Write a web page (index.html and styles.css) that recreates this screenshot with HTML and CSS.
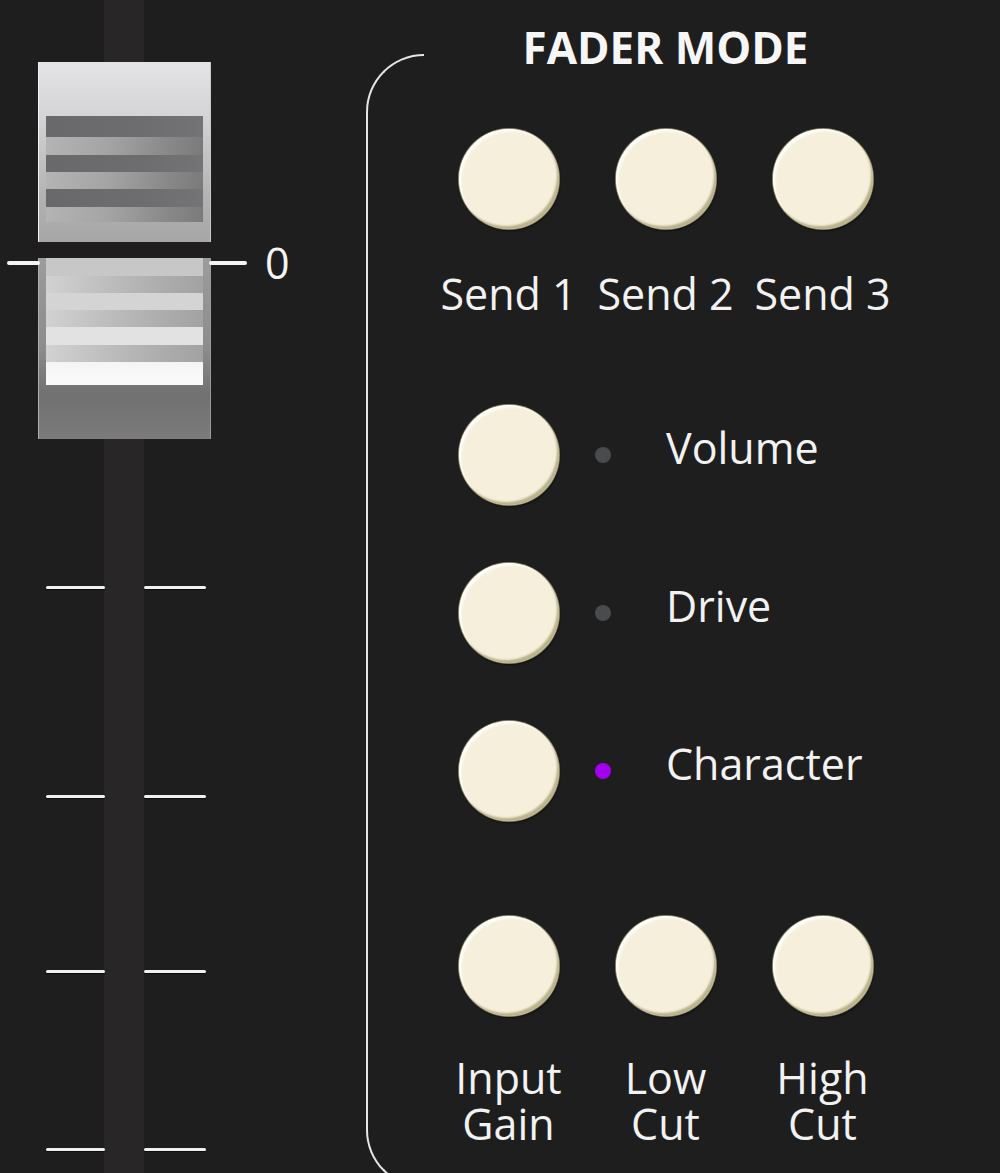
FILE: index.html
```html
<!DOCTYPE html>
<html>
<head>
<meta charset="utf-8">
<link rel="stylesheet" href="styles.css">
</head>
<body>
<div class="page">
  <div class="fader">
    <div class="cap">
      <div class="cap-top">
        <div class="grip grip-dark">
          <div class="band d b21"></div>
          <div class="band l b18"></div>
          <div class="band d b17"></div>
          <div class="band l b17"></div>
          <div class="band d b18"></div>
          <div class="band l b15"></div>
        </div>
      </div>
      <div class="cap-gap"></div>
      <div class="cap-bottom">
        <span class="zero">0</span>
        <div class="grip grip-light">
          <div class="band s1 b18"></div>
          <div class="band g b17"></div>
          <div class="band s2 b17"></div>
          <div class="band g b17"></div>
          <div class="band s3 b18"></div>
          <div class="band g b17"></div>
          <div class="band s4 b23"></div>
        </div>
      </div>
    </div>
    <div class="tick t1"><span></span><span></span></div>
    <div class="tick t2"><span></span><span></span></div>
    <div class="tick t3"><span></span><span></span></div>
    <div class="tick t4"><span></span><span></span></div>
  </div>

  <div class="panel">
    <div class="bracket"></div>
    <div class="content">
      <h2 class="title">FADER MODE</h2>
      <div class="row3 sends">
        <div class="cell"><div class="btn"></div><div class="label">Send 1</div></div>
        <div class="cell"><div class="btn"></div><div class="label">Send 2</div></div>
        <div class="cell"><div class="btn"></div><div class="label">Send 3</div></div>
      </div>
      <div class="modes">
        <div class="mode">
          <div class="mode-btn"><div class="btn"></div></div>
          <span class="led"></span>
          <span class="mode-label">Volume</span>
        </div>
        <div class="mode">
          <div class="mode-btn"><div class="btn"></div></div>
          <span class="led"></span>
          <span class="mode-label">Drive</span>
        </div>
        <div class="mode">
          <div class="mode-btn"><div class="btn"></div></div>
          <span class="led on"></span>
          <span class="mode-label">Character</span>
        </div>
      </div>
      <div class="row3 bottom">
        <div class="cell"><div class="btn"></div><div class="label two">Input<br>Gain</div></div>
        <div class="cell"><div class="btn"></div><div class="label two">Low<br>Cut</div></div>
        <div class="cell"><div class="btn"></div><div class="label two">High<br>Cut</div></div>
      </div>
    </div>
  </div>
</div>
</body>
</html>
```

FILE: styles.css
```css
html, body {
  margin: 0;
  padding: 0;
  background: #1e1e1e;
}
body {
  width: 1000px;
  height: 1173px;
  overflow: hidden;
  font-family: "Open Sans", "Liberation Sans", sans-serif;
  color: #f2f2f2;
}
.page {
  display: flex;
  height: 1173px;
}

/* ---------- Fader ---------- */
.fader {
  width: 366px;
  flex: none;
  height: 1173px;
  background: linear-gradient(to right, transparent 104px, #282627 104px, #282627 144px, transparent 144px);
}
.cap {
  margin-top: 62px;
  margin-left: 38px;
  width: 173px;
}
.cap-top {
  height: 180px;
  box-sizing: border-box;
  padding: 54px 8px 0 8px;
  background: linear-gradient(to bottom, #e4e4e6 0%, #d4d4d6 30%, #b2b2b3 75%, #a6a6a7 100%);
  box-shadow: inset 1px 0 0 #f2f2f2, inset -1px 0 0 #c8c8c8;
}
.cap-gap {
  height: 16px;
  background: #1f1d1e;
}
.cap-bottom {
  position: relative;
  height: 181px;
  box-sizing: border-box;
  padding: 0 8px;
  background: linear-gradient(to bottom, #9c9c9d 0%, #8c8c8d 50%, #717172 75%, #7b7b7c 100%);
  box-shadow: inset 1px 0 0 #b0b0b0, inset -1px 0 0 #9a9a9a;
}
.cap-bottom::before,
.cap-bottom::after {
  content: "";
  position: absolute;
  top: 3px;
  height: 4px;
  border-radius: 2px;
  background: #f4f4f4;
}
.cap-bottom::before {
  left: -31px;
  width: 33px;
}
.cap-bottom::after {
  left: 171px;
  width: 38px;
}
.zero {
  position: absolute;
  left: 227px;
  top: -17px;
  font-size: 43px;
  line-height: 43px;
  color: #f4f4f4;
}
.grip {
  display: flex;
  flex-direction: column;
}
.band { width: 100%; }
.b15 { height: 15px; }
.b17 { height: 17px; }
.b18 { height: 18px; }
.b21 { height: 21px; }
.b23 { height: 23px; }
.band.d {
  background: linear-gradient(to right, #69696b 0%, #6d6d6f 60%, #747476 100%);
}
.band.l {
  background: linear-gradient(100deg, #b4b4b5 0%, #a4a4a5 40%, #8a8a8b 75%, #7a7a7b 100%);
}
.grip-light .band.g {
  background: linear-gradient(100deg, #d2d2d3 0%, #bdbdbe 40%, #acacad 75%, #a2a2a3 100%);
}
.band.s1 { background: #c7c7c8; }
.band.s2 { background: #d4d4d5; }
.band.s3 { background: #e2e2e3; }
.band.s4 { background: linear-gradient(to bottom, #f4f4f4, #fbfbfb); }

.tick {
  display: flex;
  margin-left: 46px;
  gap: 39px;
}
.tick span {
  display: block;
  height: 3px;
  border-radius: 2px;
  background: #f0f0f0;
  box-shadow: 0 1px 1px rgba(0,0,0,0.6);
}
.tick span:first-child { width: 59px; }
.tick span:last-child { width: 62px; }
.t1 { margin-top: 147px; }
.t2 { margin-top: 206px; }
.t3 { margin-top: 172px; }
.t4 { margin-top: 175px; }

/* ---------- Panel ---------- */
.panel {
  display: flex;
  flex: 1;
}
.bracket {
  flex: none;
  width: 58px;
  height: 1134px;
  margin-top: 54px;
  box-sizing: border-box;
  border-left: 2px solid #e6e6e6;
  border-top: 2px solid #e6e6e6;
  border-bottom: 2px solid #e6e6e6;
  border-radius: 58px 0 0 58px;
}
.content {
  padding-left: 6px;
  width: 471px;
  display: flex;
  flex-direction: column;
}
.title {
  margin: 17px 0 0 0;
  font-size: 44px;
  line-height: 60px;
  font-weight: 700;
  text-align: center;
  color: #f6f6f6;
}
.row3 {
  display: grid;
  grid-template-columns: repeat(3, 157px);
}
.sends { margin-top: 52px; }
.bottom { margin-top: 95px; }
.cell {
  display: flex;
  flex-direction: column;
  align-items: center;
}
.btn {
  width: 100px;
  height: 100px;
  flex: none;
  border-radius: 50%;
  background: #f5efdb;
  box-shadow:
    inset -3px -4px 2px -1px #b9b38c,
    inset 3px 3px 3px -1px #ffffff,
    0 0 0 1px #8c8768,
    1px 2px 2px rgba(0,0,0,0.5);
}
.label {
  margin-top: 36px;
  font-size: 43px;
  line-height: 58px;
  text-align: center;
  white-space: nowrap;
  color: #f2f2f2;
}
.label.two {
  margin-top: 39px;
  line-height: 46px;
}
.modes {
  margin-top: 82px;
  display: flex;
  flex-direction: column;
  gap: 58px;
}
.mode {
  display: flex;
  align-items: center;
  height: 100px;
}
.mode-btn {
  width: 157px;
  flex: none;
  display: flex;
  justify-content: center;
}
.led {
  flex: none;
  width: 16px;
  height: 16px;
  margin-left: 8px;
  border-radius: 50%;
  background: #4a4b4d;
}
.led.on {
  background: #a300f0;
}
.mode-label {
  margin-left: 55px;
  margin-bottom: 15px;
  font-size: 43px;
  line-height: 58px;
  white-space: nowrap;
  color: #f2f2f2;
}
```
